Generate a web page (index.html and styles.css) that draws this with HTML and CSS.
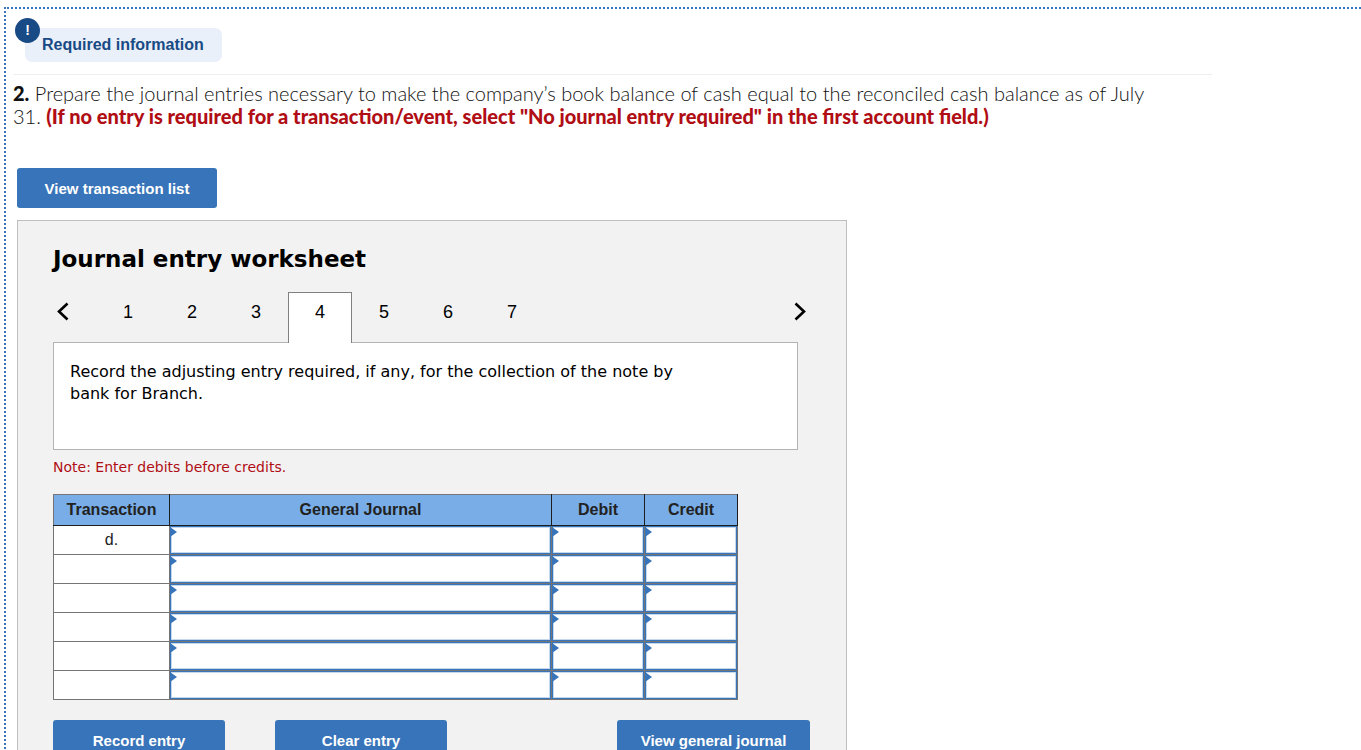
FILE: index.html
```html
<!DOCTYPE html>
<html lang="en">
<head>
<meta charset="utf-8">
<meta name="viewport" content="width=device-width, initial-scale=1">
<title>Journal entry worksheet</title>
<link rel="stylesheet" href="styles.css">
</head>
<body>
<main class="page">
  <header class="info">
    <div class="info-tag">Required information<span class="info-badge">!</span></div>
  </header>
  <p class="question"><b>2.</b> Prepare the journal entries necessary to make the company’s book balance of cash equal to the reconciled cash balance as of July 31. <strong class="hint">(If no entry is required for a transaction/event, select "No journal entry required" in the first account field.)</strong></p>
  <button class="btn btn-list" type="button">View transaction list</button>
  <section class="sheet">
    <h1 class="sheet-title">Journal entry worksheet</h1>
    <nav class="tabs" aria-label="Entries">
      <button class="arrow" type="button" aria-label="Previous"><svg width="12" height="20" viewBox="0 0 12 20"><path d="M10.500 1.500L2 9.500l8.500 8" fill="none" stroke="#000" stroke-width="2.600"/></svg></button>
      <button class="tab" type="button">1</button>
      <button class="tab" type="button">2</button>
      <button class="tab" type="button">3</button>
      <button class="tab active" type="button">4</button>
      <button class="tab" type="button">5</button>
      <button class="tab" type="button">6</button>
      <button class="tab" type="button">7</button>
      <button class="arrow next" type="button" aria-label="Next"><svg width="12" height="20" viewBox="0 0 12 20"><path d="M1.500 1.500L10 9.500l-8.500 8" fill="none" stroke="#000" stroke-width="2.600"/></svg></button>
    </nav>
    <div class="task"><p class="task-text">Record the adjusting entry required, if any, for the collection of the note by bank for Branch.</p></div>
    <p class="note">Note: Enter debits before credits.</p>
    <table class="journal">
      <thead>
        <tr><th class="col-trans">Transaction</th><th class="col-general">General Journal</th><th class="col-amount">Debit</th><th class="col-amount">Credit</th></tr>
      </thead>
      <tbody>
        <tr><td class="trans">d.</td><td class="entry"><input class="field" aria-label="Account 1"></td><td class="entry"><input class="field" aria-label="Debit 1"></td><td class="entry"><input class="field" aria-label="Credit 1"></td></tr>
        <tr><td class="trans"></td><td class="entry"><input class="field" aria-label="Account 2"></td><td class="entry"><input class="field" aria-label="Debit 2"></td><td class="entry"><input class="field" aria-label="Credit 2"></td></tr>
        <tr><td class="trans"></td><td class="entry"><input class="field" aria-label="Account 3"></td><td class="entry"><input class="field" aria-label="Debit 3"></td><td class="entry"><input class="field" aria-label="Credit 3"></td></tr>
        <tr><td class="trans"></td><td class="entry"><input class="field" aria-label="Account 4"></td><td class="entry"><input class="field" aria-label="Debit 4"></td><td class="entry"><input class="field" aria-label="Credit 4"></td></tr>
        <tr><td class="trans"></td><td class="entry"><input class="field" aria-label="Account 5"></td><td class="entry"><input class="field" aria-label="Debit 5"></td><td class="entry"><input class="field" aria-label="Credit 5"></td></tr>
        <tr><td class="trans"></td><td class="entry"><input class="field" aria-label="Account 6"></td><td class="entry"><input class="field" aria-label="Debit 6"></td><td class="entry"><input class="field" aria-label="Credit 6"></td></tr>
      </tbody>
    </table>
    <div class="actions">
      <button class="btn btn-action" type="button">Record entry</button>
      <button class="btn btn-action" type="button">Clear entry</button>
      <button class="btn btn-journal" type="button">View general journal</button>
    </div>
  </section>
</main>
</body>
</html>
```

FILE: styles.css
```css
* { box-sizing: border-box; }
body {
  margin: 0;
  padding: 7px 0 0 4px;
  background: #fff;
  color: #222;
  font-family: "Liberation Sans", Arial, sans-serif;
}
.page {
  border: 2px dotted #3874b9;
  border-width: 2px 0 0 2px;
  padding: 19px 0 24px 7px;
}
.info {
  max-width: 1199px;
  padding: 0 0 12px 12px;
  border-bottom: 1px solid #eee;
}
.info-tag {
  position: relative;
  width: fit-content;
  height: 34px;
  padding: 0 18px 0 17px;
  border-radius: 7px;
  background: #eaf0f9;
  color: #184a85;
  font-size: 16px;
  font-weight: bold;
  line-height: 34px;
}
.info-badge {
  position: absolute;
  left: -10px;
  top: -10px;
  width: 25px;
  height: 25px;
  border-radius: 50%;
  background: #184a85;
  color: #fff;
  font-size: 14px;
  line-height: 25px;
  text-align: center;
}
.question {
  max-width: 1150px;
  margin: 7px 0 40px;
  color: #111;
  font-family: Lato, sans-serif;
  font-size: 20px;
  font-weight: 300;
  line-height: 23px;
}
.question b { font-weight: 900; }
.question .hint {
  color: #b00e14;
  font-weight: 900;
}
.btn {
  height: 40px;
  padding: 0;
  border: 0;
  border-radius: 3px;
  background: #3874b9;
  color: #fff;
  font: bold 15px "Liberation Sans", Arial, sans-serif;
}
.btn-list {
  display: block;
  width: 200px;
  margin-left: 4px;
}
.sheet {
  max-width: 830px;
  margin: 12px 0 0 4px;
  padding: 24px 36px 36px 35px;
  border: 1px solid #bfbfbf;
  background: #f2f2f2;
  color: #000;
}
.sheet-title {
  margin: 0 0 19px;
  font: bold 23px/28px Verdana, "DejaVu Sans", sans-serif;
}
.tabs {
  display: flex;
  align-items: stretch;
  height: 50px;
  max-width: 757px;
}
.arrow {
  display: flex;
  align-items: center;
  width: 43px;
  padding: 0 0 11px 4px;
  border: 0;
  background: none;
}
.next {
  width: 20px;
  margin-left: auto;
}
.tab {
  width: 64px;
  padding: 0 0 10px;
  border: 0;
  background: none;
  color: #000;
  font: 18px "Liberation Sans", Arial, sans-serif;
}
.tab.active {
  z-index: 1;
  height: 51px;
  padding-bottom: 12px;
  border: 1px solid #808080;
  border-bottom: 0;
  background: #fff;
}
.task {
  max-width: 745px;
  min-height: 108px;
  padding: 18px 16px;
  border: 1px solid #b3b3b3;
  background: #fff;
}
.task-text {
  max-width: 640px;
  margin: 0;
  font: 16px/22px Verdana, "DejaVu Sans", sans-serif;
}
.note {
  margin: 8px 0 17px;
  color: #b00e14;
  font: 14px/19px Verdana, "DejaVu Sans", sans-serif;
}
.journal {
  width: 685px;
  max-width: 100%;
  table-layout: fixed;
  border-collapse: collapse;
  background: #fff;
  color: #222;
  font-size: 16px;
}
.journal th {
  height: 31px;
  padding: 0;
  border: 1px solid #1d1d1d;
  border-top-color: #757575;
  background: #79ade7;
}
.journal th:first-child { border-left-color: #757575; }
.col-trans { width: 116px; }
.col-amount { width: 93px; }
.journal td {
  height: 29px;
  padding: 0;
  border: 1px solid #757575;
  text-align: center;
}
.entry { position: relative; }
.entry::before {
  content: "";
  position: absolute;
  left: 0;
  top: 1px;
  border: 5px solid transparent;
  border-left: 7px solid #3874b9;
  border-right: 0;
}
.field {
  display: block;
  width: 100%;
  height: 28px;
  padding: 0 8px;
  border: 1px solid #3874b9;
  border-radius: 0;
  outline: 0;
  background: #fff;
  box-shadow: inset 0 0 0 1px #c5d9ee;
  font: inherit;
}
.actions {
  display: flex;
  gap: 50px;
  max-width: 757px;
  margin-top: 20px;
}
.btn-action { width: 172px; }
.btn-journal {
  width: 193px;
  margin-left: auto;
}
```
